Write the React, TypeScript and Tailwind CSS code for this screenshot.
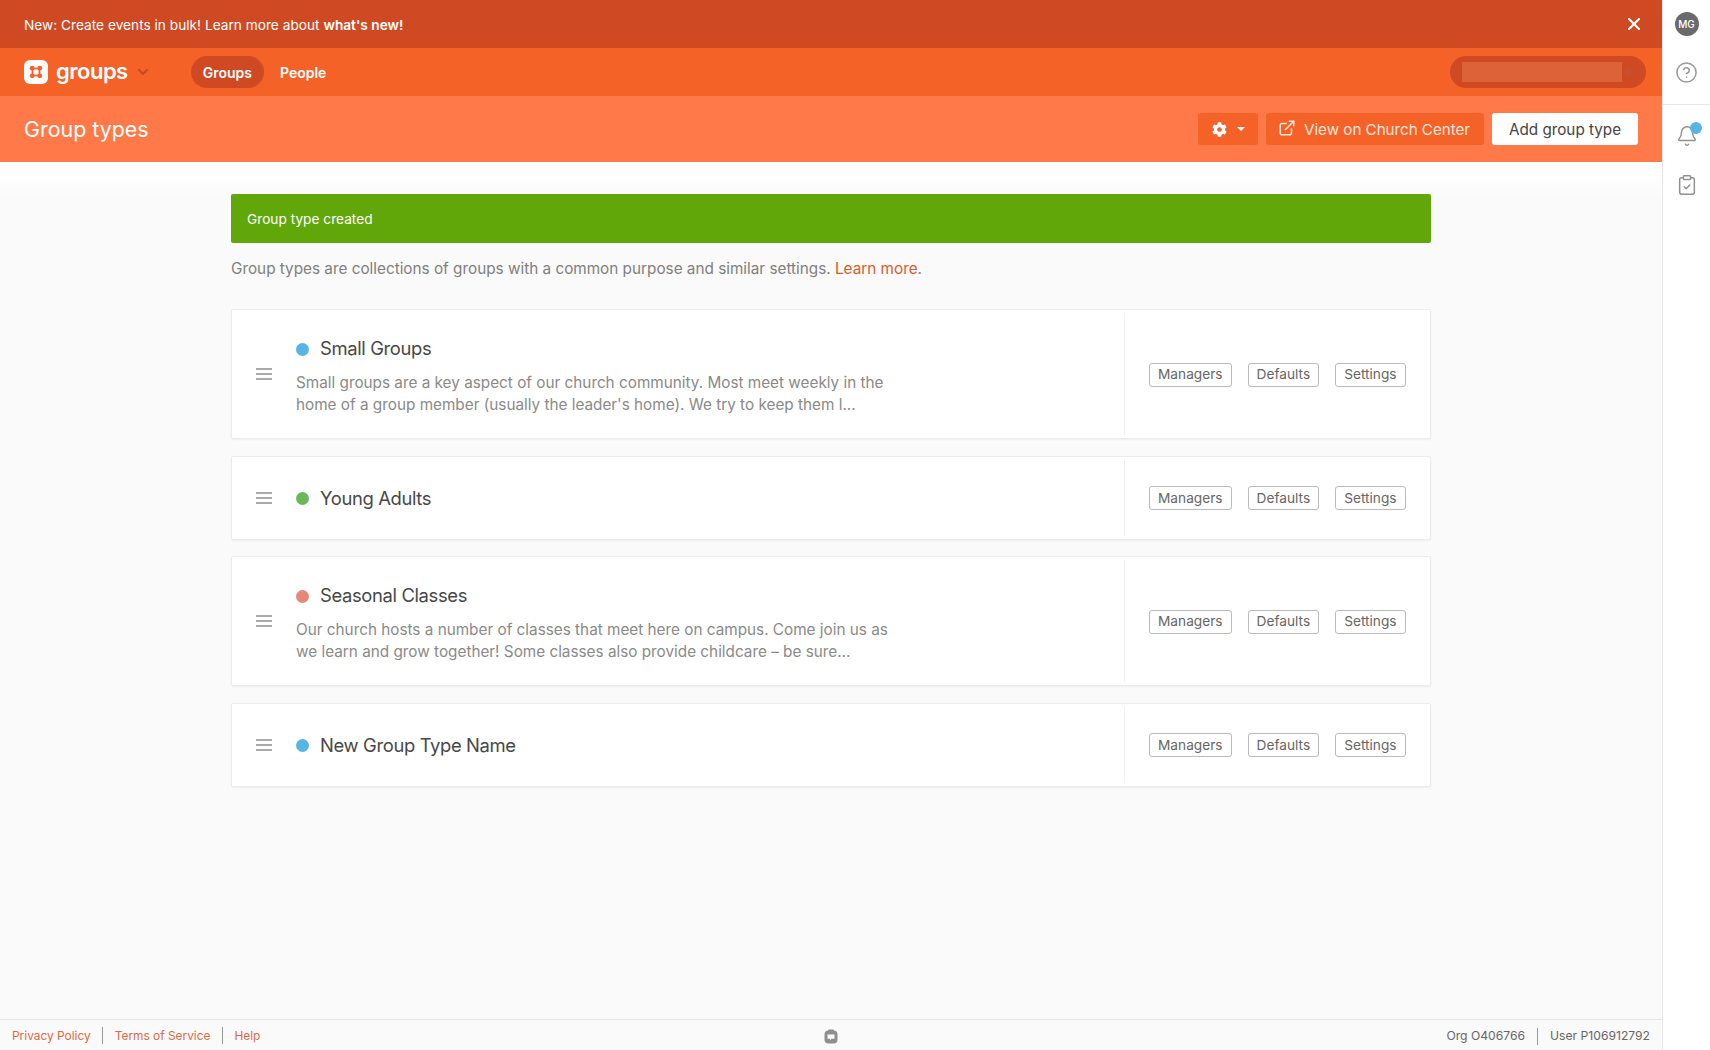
import { X, CircleHelp, Bell, ClipboardCheck, ChevronDown, ExternalLink } from "lucide-react";
import { FaCog } from "react-icons/fa";

const groupTypes = [
  {
    name: "Small Groups",
    dot: "bg-[#58b5e3]",
    description:
      "Small groups are a key aspect of our church community. Most meet weekly in the home of a group member (usually the leader's home). We try to keep them l...",
  },
  { name: "Young Adults", dot: "bg-[#6bb85c]" },
  {
    name: "Seasonal Classes",
    dot: "bg-[#e5877b]",
    description:
      "Our church hosts a number of classes that meet here on campus. Come join us as we learn and grow together! Some classes also provide childcare – be sure...",
  },
  { name: "New Group Type Name", dot: "bg-[#58b5e3]" },
];

function GroupsLogo() {
  return (
    <svg width="24" height="24" viewBox="0 0 24 24" className="shrink-0">
      <rect width="24" height="24" rx="6" fill="#fff" />
      <rect x="8.5" y="8.5" width="7" height="7" fill="none" stroke="#f4622a" strokeWidth="1.8" />
      <circle cx="8.2" cy="8.2" r="2.4" fill="#f4622a" />
      <circle cx="15.8" cy="8.2" r="2.4" fill="#f4622a" />
      <circle cx="8.2" cy="15.8" r="2.4" fill="#f4622a" />
      <circle cx="15.8" cy="15.8" r="2.4" fill="#f4622a" />
    </svg>
  );
}

function DragHandle() {
  return (
    <div className="flex w-4 flex-col gap-[3px]">
      <div className="h-[2px] bg-[#aaaaaa]" />
      <div className="h-[2px] bg-[#aaaaaa]" />
      <div className="h-[2px] bg-[#aaaaaa]" />
    </div>
  );
}

function GroupTypeCard({ name, dot, description }: { name: string; dot: string; description?: string }) {
  return (
    <div className="flex rounded-[2px] border border-[#ececec] bg-white shadow-[0_1px_2px_rgba(0,0,0,0.05)]">
      <div className="flex w-[892px] items-center">
        <div className="ml-[24px] mr-[24px]">
          <DragHandle />
        </div>
        <div className={description ? "pb-[22px] pt-[23px]" : "pb-[24px] pt-[26px]"}>
          <div className="flex h-[32px] items-center">
            <span className={`mr-[11px] size-[13px] rounded-full ${dot}`} />
            <span className="text-[18.4px] tracking-[-0.35px] text-[#484848]">{name}</span>
          </div>
          {description && (
            <p className="mt-[7px] w-[600px] text-[15.3px] leading-[22px] text-[#8a8a8a]">{description}</p>
          )}
        </div>
      </div>
      <div className="my-[3px] flex flex-1 items-center gap-[16px] border-l border-[#f0f0f0] pl-[24px]">
        {["Managers", "Defaults", "Settings"].map((label) => (
          <button
            key={label}
            className="mt-px flex h-[24px] items-center rounded-[3px] border border-[#bbbbbb] px-[8px] text-[13.7px] text-[#666666]"
          >
            {label}
          </button>
        ))}
      </div>
    </div>
  );
}

export default function App() {
  return (
    <div className="flex h-[1050px] bg-white font-['Inter',sans-serif]">
      <div className="flex min-w-0 flex-1 flex-col bg-[#fafafa]">
        {/* Announcement */}
        <div className="flex h-[48px] items-center justify-between bg-[#cf4a23] pl-[24px] pr-[18px] text-[13.7px] text-white">
          <span className="translate-y-px">
            New: Create events in bulk! Learn more about <strong className="font-semibold">what's new!</strong>
          </span>
          <X className="size-[20px]" strokeWidth={2.5} />
        </div>

        {/* Nav */}
        <div className="flex h-[48px] items-center bg-[#f46228] pl-[24px] pr-[16px]">
          <GroupsLogo />
          <span className="ml-[8px] -translate-y-px text-[22px] font-semibold tracking-[-0.5px] text-white">groups</span>
          <ChevronDown className="ml-[7px] size-[16px] text-[#c9481f]" strokeWidth={3} />
          <div className="ml-[40px] flex items-center gap-[2px] text-[14px] font-semibold text-white">
            <span className="flex h-[32px] items-center rounded-full bg-[#cf4a23] px-[12px]">Groups</span>
            <span className="ml-[2px] flex h-[32px] items-center px-[12px]">People</span>
          </div>
          <div className="ml-auto flex h-[32px] w-[196px] items-center rounded-full bg-[#cf4a23] px-[12px]">
            <div className="h-[20px] w-[163px] bg-[#dc6337]" />
            <div className="ml-[2px] size-[10px] rounded-full bg-[#c7502c]" />
          </div>
        </div>

        {/* Page header */}
        <div className="flex h-[66px] items-center bg-[#ff7a48] pl-[24px] pr-[24px]">
          <h1 className="text-[21.4px] text-white">Group types</h1>
          <div className="ml-auto flex items-center gap-[8px] text-[15.25px]">
            <button className="flex h-[32px] w-[60px] items-center justify-center gap-[10px] rounded-[3px] bg-[#f46228] text-white">
              <FaCog className="size-[15px]" />
              <span className="border-x-[4px] border-t-[4px] border-x-transparent border-t-white" />
            </button>
            <button className="flex h-[32px] w-[218px] items-center gap-[8px] rounded-[3px] bg-[#f46228] pl-[12px] text-[15.15px] text-[#ffe6da]">
              <ExternalLink className="size-[18px] -translate-y-px" strokeWidth={2} />
              <span className="translate-y-px">View on Church Center</span>
            </button>
            <button className="flex h-[32px] w-[146px] items-center justify-center rounded-[3px] bg-white text-[#444444]">
              <span className="translate-y-px">Add group type</span>
            </button>
          </div>
        </div>

        {/* Main */}
        <main className="flex-1 bg-[linear-gradient(#ffffff,#fafafa_40px)]">
          <div className="mx-auto mt-[32px] w-[1200px]">
            <div className="flex h-[49px] items-center rounded-[2px] bg-[#62a70a] px-[16px] pt-[2px] text-[13.7px] text-white">
              Group type created
            </div>
            <p className="mt-[15px] text-[15.3px] leading-[22px] text-[#808080]">
              Group types are collections of groups with a common purpose and similar settings.{" "}
              <span className="text-[#dd5a2c]">Learn more</span>.
            </p>
            <div className="mt-[29px] flex flex-col gap-[16.5px]">
              {groupTypes.map((g) => (
                <GroupTypeCard key={g.name} {...g} />
              ))}
            </div>
          </div>
        </main>

        {/* Footer */}
        <footer className="flex h-[31px] items-center justify-between border-t border-[#e6e6e6] px-[12px] pt-[3px]">
          <div className="flex flex-1 -translate-y-px items-center text-[11.9px] text-[#dd6a45]">
            <span>Privacy Policy</span>
            <span className="mx-[11.5px] h-[17px] w-px bg-[#999999]" />
            <span>Terms of Service</span>
            <span className="mx-[11.5px] h-[17px] w-px bg-[#999999]" />
            <span>Help</span>
          </div>
          <svg width="16" height="16" viewBox="0 0 16 16">
            <rect x="1.5" y="1.5" width="13" height="13" rx="4" fill="#8f8f8f" />
            <rect x="5" y="0.5" width="6" height="2" rx="1" fill="#8f8f8f" />
            <path d="M4.5 5.5h7v4.2H8.6L7 11.2V9.7H4.5z" fill="#fafafa" />
          </svg>
          <div className="flex flex-1 items-center justify-end text-[12.15px] text-[#666666]">
            <span>Org O406766</span>
            <span className="mx-[12px] h-[17px] w-px bg-[#999999]" />
            <span>User P106912792</span>
          </div>
        </footer>
      </div>

      {/* Right rail */}
      <aside className="flex w-[48px] shrink-0 flex-col items-center border-l border-[#e6e6e6] bg-white">
        <div className="mt-[12px] flex size-[24px] items-center justify-center rounded-full bg-[#6a6a6a] text-[10px] font-medium text-white">
          MG
        </div>
        <CircleHelp className="mt-[25px] size-[23px] text-[#9a9a9a]" strokeWidth={1.6} />
        <div className="mt-[20px] h-px w-full bg-[#e6e6e6]" />
        <div className="relative mt-[20px]">
          <Bell className="size-[22px] text-[#8f8f8f]" strokeWidth={1.6} />
          <span className="absolute -right-[4px] -top-[3px] size-[12px] rounded-full bg-[#58b5e3]" />
        </div>
        <ClipboardCheck className="mt-[27px] size-[22px] text-[#8f8f8f]" strokeWidth={1.6} />
      </aside>
    </div>
  );
}
